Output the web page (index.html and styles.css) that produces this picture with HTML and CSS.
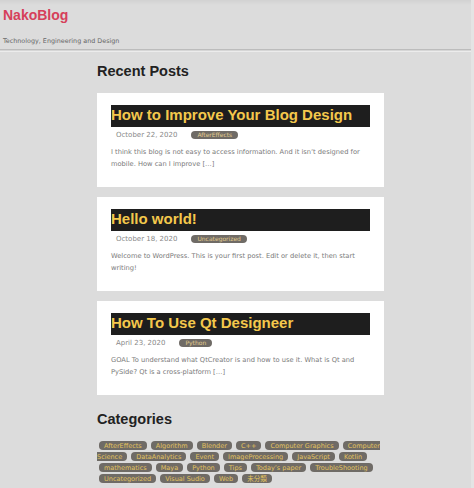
FILE: index.html
```html
<!DOCTYPE html>
<html lang="en">
<head>
<meta charset="utf-8">
<title>NakoBlog</title>
<link rel="stylesheet" href="styles.css">
</head>
<body>
<header class="site-header">
  <h1 class="site-title">NakoBlog</h1>
  <p class="site-tagline">Technology, Engineering and Design</p>
</header>
<hr class="header-rule">
<main class="content">
  <h2 class="section-title">Recent Posts</h2>
  <div class="posts">
    <article class="post">
      <h3 class="post-title">How to Improve Your Blog Design</h3>
      <div class="post-meta"><span class="post-date">October 22, 2020</span><span class="tag">AfterEffects</span></div>
      <p class="post-excerpt">I think this blog is not easy to access information. And it isn’t designed for mobile. How can I improve […]</p>
    </article>
    <article class="post">
      <h3 class="post-title">Hello world!</h3>
      <div class="post-meta"><span class="post-date">October 18, 2020</span><span class="tag">Uncategorized</span></div>
      <p class="post-excerpt">Welcome to WordPress. This is your first post. Edit or delete it, then start writing!</p>
    </article>
    <article class="post">
      <h3 class="post-title">How To Use Qt Designeer</h3>
      <div class="post-meta"><span class="post-date">April 23, 2020</span><span class="tag">Python</span></div>
      <p class="post-excerpt">GOAL To understand what QtCreator is and how to use it. What is Qt and PySide? Qt is a cross-platform […]</p>
    </article>
  </div>
  <h2 class="section-title categories-title">Categories</h2>
  <div class="category-list"><span class="cat">AfterEffects</span> <span class="cat">Algorithm</span> <span class="cat">Blender</span> <span class="cat">C++</span> <span class="cat">Computer Graphics</span> <span class="cat">Computer Science</span> <span class="cat">DataAnalytics</span> <span class="cat">Event</span> <span class="cat">ImageProcessing</span> <span class="cat">JavaScript</span> <span class="cat">Kotlin</span> <span class="cat">mathematics</span> <span class="cat">Maya</span> <span class="cat">Python</span> <span class="cat">Tips</span> <span class="cat">Today’s paper</span> <span class="cat">TroubleShooting</span> <span class="cat">Uncategorized</span> <span class="cat">Visual Sudio</span> <span class="cat">Web</span> <span class="cat">未分類</span></div>
</main>
</body>
</html>
```
FILE: styles.css
```css
html, body {
  margin: 0;
  padding: 0;
}
body {
  background: #dcdcdc;
  font-family: "DejaVu Sans", "Noto Sans CJK JP", sans-serif;
  color: #444;
  height: 488px;
  overflow: hidden;
  box-sizing: border-box;
  border-right: 3px solid #e4e4e4;
}
.site-header {
  padding: 7px 3px 0;
  background: linear-gradient(#d2d2d2, #dcdcdc 5px);
}
.site-title {
  margin: 0;
  font-family: "Liberation Sans", Arial, sans-serif;
  font-weight: bold;
  font-size: 14px;
  line-height: 16px;
  color: #d6405a;
}
.site-tagline {
  margin: 14px 0 0;
  font-size: 6.4px;
  line-height: 8px;
  color: #666;
}
.header-rule {
  margin: 4px 0 0;
  height: 1px;
  border: 0;
  border-top: 1px solid #bcbcbc;
  border-bottom: 1px solid #ececec;
  background: #d6d6d6;
}
.content {
  margin-left: 97px;
  width: 287px;
}
.section-title {
  margin: 10px 0 0;
  font-family: "Liberation Sans", Arial, sans-serif;
  font-weight: bold;
  font-size: 14.5px;
  line-height: 18px;
  color: #222;
}
.posts {
  margin-top: 13px;
  display: flex;
  flex-direction: column;
  gap: 10px;
}
.post {
  background: #fff;
  padding: 12px 14px 17px;
}
.post-title {
  margin: 0;
  background: #1e1e1e;
  color: #f4c84c;
  font-family: "Liberation Sans", Arial, sans-serif;
  font-weight: bold;
  font-size: 15px;
  line-height: 19px;
  padding-bottom: 3px;
  white-space: nowrap;
}
.post-meta {
  margin-top: 1px;
  height: 14px;
  display: flex;
  align-items: center;
  padding-left: 5px;
}
.post-date {
  font-size: 7px;
  color: #888;
}
.tag {
  margin-left: 14px;
  background: #6f6b66;
  color: #e3cb8e;
  font-size: 6px;
  line-height: 8px;
  padding: 0 6px;
  border-radius: 4px;
}
.post-excerpt {
  margin: 5px 0 0;
  font-size: 6.7px;
  line-height: 11.5px;
  color: #7a7a7a;
}
.categories-title {
  margin-top: 15px;
}
.category-list {
  margin-top: 12px;
  font-size: 6.5px;
  line-height: 11.2px;
}
.cat {
  background: #6f6b66;
  color: #e2c25e;
  padding: 0.5px 5px;
  margin: 0 0 0 2px;
  border-radius: 4px;
}
```
